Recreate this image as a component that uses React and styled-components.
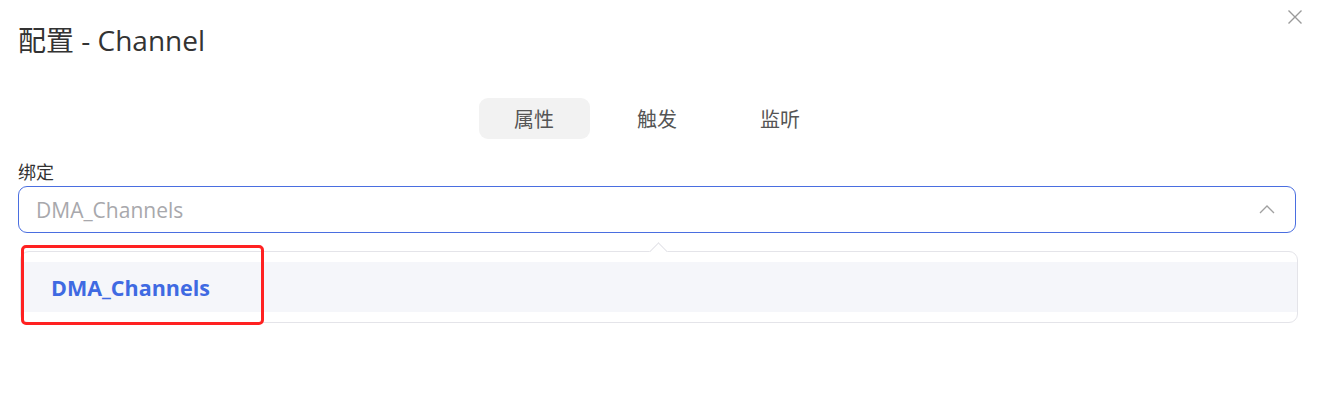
import React, { useState } from 'react';
import styled, { createGlobalStyle } from 'styled-components';

const GlobalStyle = createGlobalStyle`
    body {
        margin: 0;
        background: #fff;
        font-family: "Open Sans", "Noto Sans CJK SC", sans-serif;
    }
`

const Dialog = styled.div`
    width: 1317px;
    height: 405px;
    box-sizing: border-box;
    padding: 8px 14px 0 18px;
    background: #fff;
`

const Header = styled.div`
    display: flex;
    justify-content: space-between;
    align-items: flex-start;
`

const Title = styled.h2`
    margin: 14px 0 0 0;
    font-size: 28px;
    line-height: 36px;
    font-weight: 400;
    color: #333;
`

const CloseButton = styled.button`
    width: 17px;
    height: 17px;
    padding: 0;
    border: none;
    background: none;
    cursor: pointer;
    display: flex;
    align-items: center;
    justify-content: center;
`

const Body = styled.div`
    padding-right: 7px;
`

const Tabs = styled.div`
    display: flex;
    justify-content: center;
    gap: 12px;
    margin-top: 40px;
`

const Tab = styled.div`
    width: 111px;
    height: 41px;
    border-radius: 9px;
    display: flex;
    align-items: center;
    justify-content: center;
    font-family: "Noto Sans CJK SC", sans-serif;
    font-size: 20px;
    color: #555;
    background: ${props => props.active ? '#f2f2f2' : 'transparent'};
    cursor: pointer;
`

const Label = styled.div`
    margin-top: 20px;
    font-family: "Noto Sans CJK SC", sans-serif;
    font-size: 18px;
    line-height: 24px;
    color: #333;
`

const Field = styled.div`
    position: relative;
    margin-top: 3px;
    display: flex;
    flex-direction: column;
    gap: 18px;
`

const SelectBox = styled.div`
    height: 47px;
    box-sizing: border-box;
    border: 1px solid #4a6ee0;
    border-radius: 9px;
    display: flex;
    align-items: center;
    justify-content: space-between;
    padding: 0 20px 0 17px;
`

const Placeholder = styled.span`
    font-size: 21px;
    color: #a8a8ac;
`

const Dropdown = styled.div`
    position: relative;
    margin: 0 -2px 0 2px;
    box-sizing: border-box;
    border: 1px solid #e4e4e9;
    border-radius: 9px;
    background: #fff;
    padding: 10px 0;

    &::before {
        content: "";
        position: absolute;
        top: -7px;
        left: 631px;
        width: 12px;
        height: 12px;
        background: #fff;
        border-top: 1px solid #e4e4e9;
        border-left: 1px solid #e4e4e9;
        transform: rotate(45deg);
    }
`

const Option = styled.div`
    height: 50px;
    display: flex;
    align-items: center;
    padding-left: 30px;
    background: ${props => props.selected ? '#f5f6fa' : '#fff'};
    font-size: 21.5px;
    font-weight: 700;
    color: ${props => props.selected ? '#3f6ae2' : '#333'};
`

const Highlight = styled.div`
    position: absolute;
    top: 59px;
    left: 3px;
    width: 243px;
    height: 80px;
    box-sizing: border-box;
    border: 3px solid #ff2121;
    border-radius: 5px;
    pointer-events: none;
`

const tabs = ['属性', '触发', '监听'];

function App() {
    const [active, setActive] = useState(0);

    return (
        <>
            <GlobalStyle />
            <Dialog>
                <Header>
                    <Title>配置 - Channel</Title>
                    <CloseButton aria-label="close">
                        <svg width="16" height="16" viewBox="0 0 16 16">
                            <path d="M1.5 1.5 L14.5 14.5 M14.5 1.5 L1.5 14.5" stroke="#9a9a9a" strokeWidth="1.4" fill="none" />
                        </svg>
                    </CloseButton>
                </Header>
                <Body>
                    <Tabs>
                        {tabs.map((t, i) => (
                            <Tab key={t} active={i === active} onClick={() => setActive(i)}>{t}</Tab>
                        ))}
                    </Tabs>
                    <Label>绑定</Label>
                    <Field>
                        <SelectBox>
                            <Placeholder>DMA_Channels</Placeholder>
                            <svg width="16" height="9" viewBox="0 0 16 9">
                                <path d="M1 8 L8 1 L15 8" stroke="#a0a0a0" strokeWidth="1.3" fill="none" />
                            </svg>
                        </SelectBox>
                        <Dropdown>
                            <Option selected>DMA_Channels</Option>
                        </Dropdown>
                        <Highlight />
                    </Field>
                </Body>
            </Dialog>
        </>
    );
}

export default App;
